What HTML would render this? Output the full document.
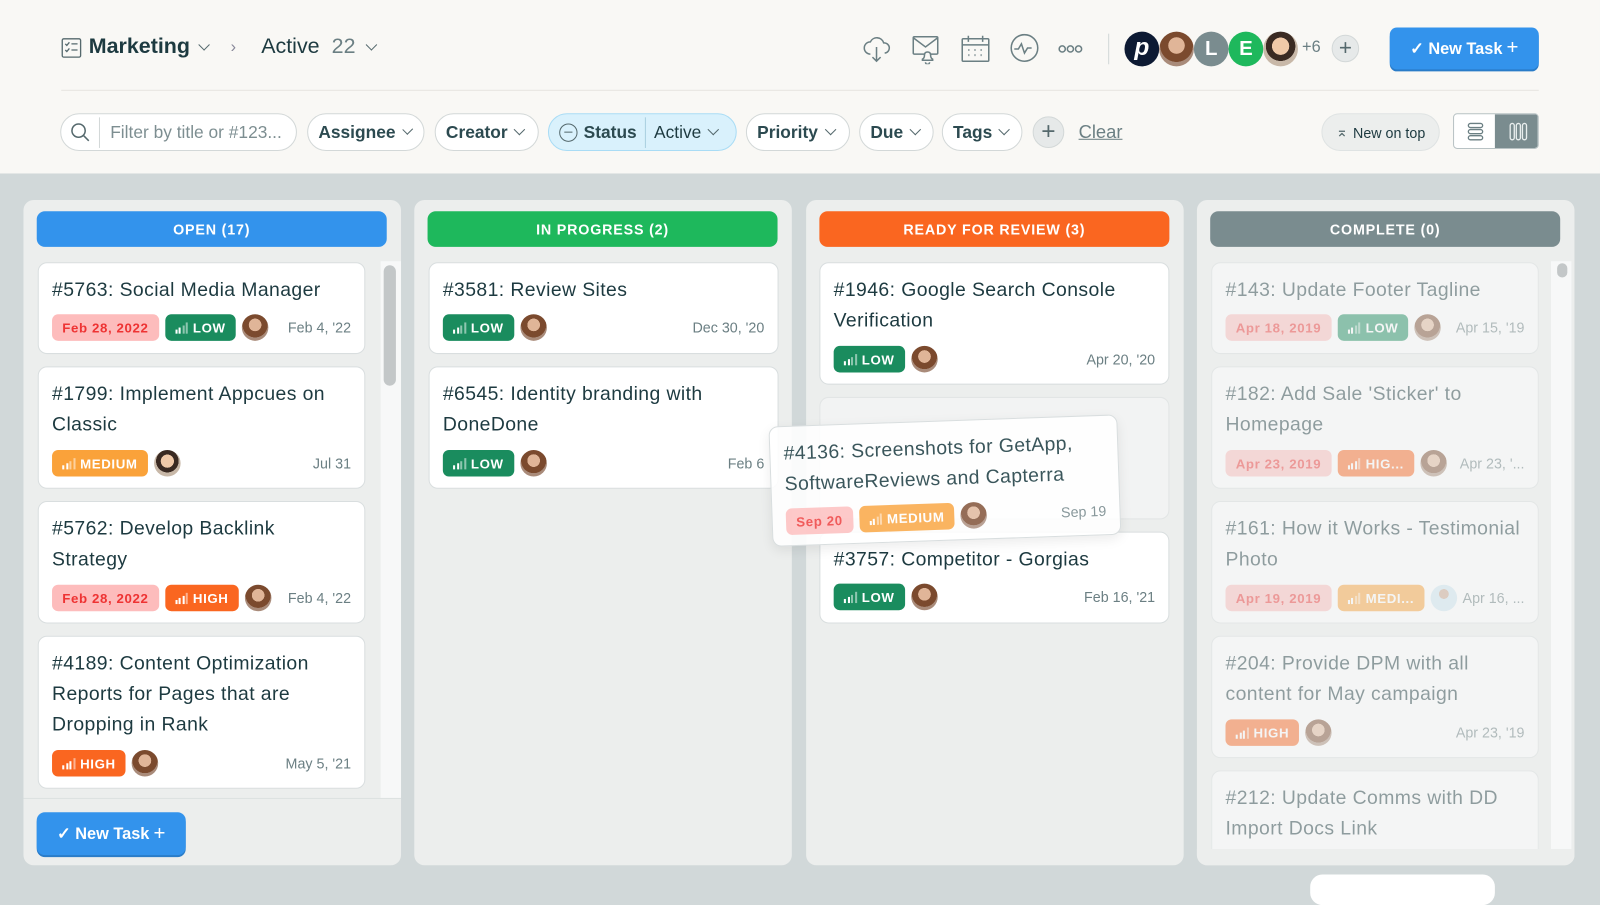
<!DOCTYPE html>
<html><head><meta charset="utf-8"><style>
*{box-sizing:border-box;margin:0;padding:0}
html,body{width:1600px;height:890px;overflow:hidden;background:#d1d8d9}
#root{position:absolute;left:0;top:0;width:1568px;height:872px;transform:scale(1.0204);transform-origin:0 0;font-family:"Liberation Sans",sans-serif;color:#1d3a40}
.hdr{position:absolute;left:0;top:0;width:1568px;height:170px;background:#f9f8f5}
.abs{position:absolute}
.pill{position:absolute;top:111px;height:37px;border:1px solid #d3d8d8;border-radius:19px;background:#fff;font-size:17px;font-weight:bold;color:#2c4a50;display:flex;align-items:center;padding:0 10px}
.chev{display:inline-block;width:8px;height:8px;border-right:1.5px solid #55696d;border-bottom:1.5px solid #55696d;transform:rotate(45deg);margin:-5px 2px 0 8px}
.col{position:absolute;top:196px;width:370px;height:652px;background:#eceeed;border-radius:10px}
.ch{position:absolute;left:13px;top:11px;width:343px;height:35px;border-radius:8px;color:#fff;font-size:14px;font-weight:bold;letter-spacing:.8px;display:flex;align-items:center;justify-content:center}
.card{position:absolute;background:#fff;border:1px solid #d9dedf;border-radius:9px}
.t{position:absolute;left:13px;top:12px;font-size:19px;line-height:30px;color:#1d3a40;white-space:nowrap;letter-spacing:.4px}
.row{position:absolute;left:13px;right:13px;height:26px;display:flex;align-items:center}
.b{height:26px;border-radius:6px;font-size:13px;font-weight:bold;letter-spacing:.6px;display:flex;align-items:center;padding:0 10px;margin-right:6px;color:#fff;white-space:nowrap}
.due{background:#fdbcbc;color:#ee3333}
.low{background:#1a8c5e}.med{background:#faa23a}.high{background:#fa6620}
.bars{display:inline-flex;align-items:flex-end;gap:1.5px;margin-right:5px;height:11px}
.bars i{display:block;width:2px;background:#fff}
.av{width:26px;height:26px;border-radius:50%;background:radial-gradient(circle at 50% 40%,#e0b598 0 30%,#7b4a2e 31% 60%,#a98b7a 61%);flex:none}
.av2{background:radial-gradient(circle at 50% 42%,#f0c9a8 0 32%,#3a2a22 33% 55%,#c8b8a8 56%)}
.d{margin-left:auto;font-size:14px;color:#6b7f83}
.fade{opacity:.45}
</style></head><body><div id="root">
<div class="hdr"></div>
<svg class="abs" style="left:60px;top:37px" width="20" height="20" viewBox="0 0 20 20" fill="none" stroke="#55696d" stroke-width="1.3"><rect x="1" y="1" width="18" height="18" rx="1.5"/><path d="M4 6l1.5 1.5L8 4.5M10 6h6M4 12l1.5 1.5L8 10.5M10 12h6"/></svg>
<div class="abs" style="left:87px;top:34px;font-size:21px;font-weight:bold;color:#1d3a40">Marketing</div>
<span class="chev abs" style="left:188px;top:45px"></span>
<div class="abs" style="left:226px;top:38px;font-size:16px;color:#889">›</div>
<div class="abs" style="left:256px;top:34px;font-size:21px;color:#1d3a40">Active <span style="color:#6b7f83;margin-left:6px">22</span></div>
<span class="chev abs" style="left:352px;top:45px"></span>
<svg class="abs" style="left:845px;top:33px" width="240" height="30" viewBox="0 0 240 30" fill="none" stroke="#6b7f83" stroke-width="1.5">
<path d="M8 20a6 6 0 0 1 0-12a7 7 0 0 1 13 1a5 5 0 0 1 1 10M14 13v14M10 23l4 4 4-4"/>
<rect x="50" y="3" width="24" height="17" rx="1"/><path d="M50 4l12 9 12-9M62 28a2 2 0 0 0 4 0M59 26h10v-1q-2-1-2-4q0-3-3-3q-3 0-3 3q0 3-2 4z" fill="#f9f8f5"/>
<rect x="98" y="5" width="26" height="22" rx="1"/><path d="M98 11h26M104 2v6M118 2v6"/><path d="M104 16h1M110 16h1M116 16h1M104 21h1M110 21h1M116 21h1" stroke-width="2"/>
<circle cx="159" cy="14" r="13"/><path d="M149 15h4l3-5 3 9 3-5h4"/>
<circle cx="196" cy="15" r="3"/><circle cx="204" cy="15" r="3"/><circle cx="212" cy="15" r="3"/>
</svg>
<div class="abs" style="left:1086px;top:33px;width:1px;height:30px;background:#d3d8d8"></div>
<div class="abs" style="left:1102px;top:31px;width:34px;height:34px;border-radius:50%;background:#0d1a33;color:#fff;font-size:24px;font-weight:bold;font-style:italic;text-align:center;line-height:32px">p</div>
<div class="abs av" style="left:1136px;top:31px;width:34px;height:34px"></div>
<div class="abs" style="left:1170px;top:31px;width:34px;height:34px;border-radius:50%;background:#7a8c8f;color:#fff;font-size:20px;font-weight:bold;text-align:center;line-height:34px">L</div>
<div class="abs" style="left:1204px;top:31px;width:34px;height:34px;border-radius:50%;background:#1eb85c;color:#fff;font-size:20px;font-weight:bold;text-align:center;line-height:34px">E</div>
<div class="abs av av2" style="left:1238px;top:31px;width:34px;height:34px"></div>
<div class="abs" style="left:1276px;top:38px;font-size:16px;color:#6b7f83">+6</div>
<div class="abs" style="left:1305px;top:34px;width:27px;height:27px;border-radius:50%;background:#e6e9e9;border:1px solid #d3d8d8;text-align:center;line-height:24px;font-size:22px;color:#55696d">+</div>
<div class="abs" style="left:1362px;top:27px;width:146px;height:41px;border-radius:7px;background:#3393ec;box-shadow:0 2px 0 #2a7cc8;color:#fff;font-size:16px;font-weight:bold;display:flex;align-items:center;justify-content:center">✓ New Task <span style="font-weight:normal;font-size:20px;margin-left:4px">+</span></div>
<div class="abs" style="left:60px;top:88px;width:1448px;height:1px;background:#e6e5e1"></div>
<div class="pill" style="left:59px;width:232px;font-weight:normal;color:#7d8e91;padding:0"><svg style="margin:0 8px 0 9px" width="20" height="20" viewBox="0 0 20 20" fill="none" stroke="#55696d" stroke-width="1.5"><circle cx="8" cy="8" r="6.5"/><path d="M13 13l5 5"/></svg><span style="width:1px;height:30px;background:#d3d8d8;margin-right:10px"></span>Filter by title or #123...</div>
<div class="pill" style="left:301px;width:115px">Assignee<span class="chev"></span></div>
<div class="pill" style="left:426px;width:102px">Creator<span class="chev"></span></div>
<div class="pill" style="left:537px;width:185px;background:#d9f1fc;border-color:#a9dcf5"><span style="width:18px;height:18px;border:1.3px solid #55696d;border-radius:50%;display:inline-block;margin-right:6px;position:relative"><i style="position:absolute;left:4px;top:7.5px;width:8px;height:1.3px;background:#55696d"></i></span>Status<span style="width:1px;height:30px;background:#a9cfdf;margin:0 8px"></span><span style="font-weight:normal;color:#1d3a40">Active</span><span class="chev"></span></div>
<div class="pill" style="left:731px;width:102px">Priority<span class="chev"></span></div>
<div class="pill" style="left:842px;width:73px">Due<span class="chev"></span></div>
<div class="pill" style="left:923px;width:79px">Tags<span class="chev"></span></div>
<div class="abs" style="left:1012px;top:114px;width:31px;height:31px;border-radius:50%;background:#e6e9e9;border:1px solid #d3d8d8;text-align:center;line-height:27px;font-size:24px;color:#55696d">+</div>
<div class="abs" style="left:1057px;top:119px;font-size:18px;color:#6b7f83;text-decoration:underline">Clear</div>
<div class="abs" style="left:1295px;top:111px;width:116px;height:37px;border-radius:19px;background:#eceeed;border:1px solid #dfe3e3;font-size:14px;color:#1d3a40;display:flex;align-items:center;justify-content:center"><span style="font-size:14px;color:#55696d;margin-right:5px">⌅</span>New on top</div>
<div class="abs" style="left:1424px;top:111px;width:84px;height:35px;border:1px solid #b8c2c4;border-radius:4px;background:#fff;overflow:hidden"><div style="position:absolute;right:0;top:0;width:42px;height:35px;background:#7a8c8f"></div>
<svg style="position:absolute;left:12px;top:8px" width="18" height="18" fill="none" stroke="#6b7f83" stroke-width="1.3"><rect x="2" y="1" width="14" height="4" rx="2"/><rect x="2" y="7" width="14" height="4" rx="2"/><rect x="2" y="13" width="14" height="4" rx="2"/></svg>
<svg style="position:absolute;left:54px;top:8px" width="18" height="18" fill="none" stroke="#e9eeee" stroke-width="1.3"><rect x="1" y="1" width="4" height="16" rx="2"/><rect x="7" y="1" width="4" height="16" rx="2"/><rect x="13" y="1" width="4" height="16" rx="2"/></svg></div>

<div class="col" style="left:23px"><div class="ch" style="background:#3393ec">OPEN (17)</div>
<div class="abs" style="left:350px;top:60px;width:20px;height:526px;background:#f7f8f8"></div>
<div class="abs" style="left:353px;top:64px;width:12px;height:118px;border-radius:6px;background:#c3c7c8"></div>
<div class="abs" style="left:0;top:586px;width:370px;height:1px;background:#dde1e1"></div>
<div class="abs" style="left:13px;top:600px;width:146px;height:42px;border-radius:8px;background:#3393ec;box-shadow:0 2px 0 #2a7cc8;color:#fff;font-size:16px;font-weight:bold;display:flex;align-items:center;justify-content:center">✓ New Task <span style="font-weight:normal;font-size:20px;margin-left:4px">+</span></div>
</div>
<div class="col" style="left:406px"><div class="ch" style="background:#1eb85c">IN PROGRESS (2)</div></div>
<div class="col" style="left:790px"><div class="ch" style="background:#fa6620">READY FOR REVIEW (3)</div></div>
<div class="col" style="left:1173px"><div class="ch" style="background:#7a8c8f">COMPLETE (0)</div>
<div class="abs" style="left:347px;top:60px;width:20px;height:576px;background:#f7f8f8"></div>
<div class="abs" style="left:353px;top:62px;width:10px;height:14px;border-radius:5px;background:#c3c7c8"></div></div>

<div class="card" style="left:37px;top:257px;width:321px;height:90px"><div class="t">#5763: Social Media Manager</div>
<div class="row" style="top:50px"><span class="b due">Feb 28, 2022</span><span class="b low"><span class="bars"><i style="height:4px"></i><i style="height:6px"></i><i style="height:8px;opacity:.5"></i><i style="height:11px;opacity:.5"></i></span>LOW</span><span class="av"></span><span class="d">Feb 4, '22</span></div></div>
<div class="card" style="left:37px;top:359px;width:321px;height:120px"><div class="t">#1799: Implement Appcues on<br>Classic</div>
<div class="row" style="top:81px"><span class="b med"><span class="bars"><i style="height:4px"></i><i style="height:6px"></i><i style="height:8px;opacity:.5"></i><i style="height:11px;opacity:.5"></i></span>MEDIUM</span><span class="av av2"></span><span class="d">Jul 31</span></div></div>
<div class="card" style="left:37px;top:491px;width:321px;height:120px"><div class="t">#5762: Develop Backlink<br>Strategy</div>
<div class="row" style="top:81px"><span class="b due">Feb 28, 2022</span><span class="b high"><span class="bars"><i style="height:4px"></i><i style="height:6px"></i><i style="height:8px"></i><i style="height:11px;opacity:.5"></i></span>HIGH</span><span class="av"></span><span class="d">Feb 4, '22</span></div></div>
<div class="card" style="left:37px;top:623px;width:321px;height:150px"><div class="t">#4189: Content Optimization<br>Reports for Pages that are<br>Dropping in Rank</div>
<div class="row" style="top:111px"><span class="b high"><span class="bars"><i style="height:4px"></i><i style="height:6px"></i><i style="height:8px"></i><i style="height:11px;opacity:.5"></i></span>HIGH</span><span class="av"></span><span class="d">May 5, '21</span></div></div>

<div class="card" style="left:420px;top:257px;width:343px;height:90px"><div class="t">#3581: Review Sites</div>
<div class="row" style="top:50px"><span class="b low"><span class="bars"><i style="height:4px"></i><i style="height:6px"></i><i style="height:8px;opacity:.5"></i><i style="height:11px;opacity:.5"></i></span>LOW</span><span class="av"></span><span class="d">Dec 30, '20</span></div></div>
<div class="card" style="left:420px;top:359px;width:343px;height:120px"><div class="t">#6545: Identity branding with<br>DoneDone</div>
<div class="row" style="top:81px"><span class="b low"><span class="bars"><i style="height:4px"></i><i style="height:6px"></i><i style="height:8px;opacity:.5"></i><i style="height:11px;opacity:.5"></i></span>LOW</span><span class="av"></span><span class="d">Feb 6</span></div></div>

<div class="card" style="left:803px;top:257px;width:343px;height:120px"><div class="t">#1946: Google Search Console<br>Verification</div>
<div class="row" style="top:81px"><span class="b low"><span class="bars"><i style="height:4px"></i><i style="height:6px"></i><i style="height:8px;opacity:.5"></i><i style="height:11px;opacity:.5"></i></span>LOW</span><span class="av"></span><span class="d">Apr 20, '20</span></div></div>
<div class="abs" style="left:803px;top:389px;width:343px;height:120px;border-radius:9px;background:#f2f3f3;border:1px solid #e2e5e5"></div>
<div class="card" style="left:803px;top:521px;width:343px;height:90px"><div class="t" style="top:12px">#3757: Competitor - Gorgias</div>
<div class="row" style="top:50px"><span class="b low"><span class="bars"><i style="height:4px"></i><i style="height:6px"></i><i style="height:8px;opacity:.5"></i><i style="height:11px;opacity:.5"></i></span>LOW</span><span class="av"></span><span class="d">Feb 16, '21</span></div></div>
<div class="card" style="left:755px;top:412px;width:342px;height:118px;transform:rotate(-2deg);background:rgba(255,255,255,.88);box-shadow:0 4px 12px rgba(0,0,0,.08)"><div class="t" style="color:#3a565b">#4136: Screenshots for GetApp,<br>SoftwareReviews and Capterra</div>
<div class="row" style="top:80px;opacity:.8"><span class="b due">Sep 20</span><span class="b med"><span class="bars"><i style="height:4px"></i><i style="height:6px"></i><i style="height:8px;opacity:.5"></i><i style="height:11px;opacity:.5"></i></span>MEDIUM</span><span class="av"></span><span class="d">Sep 19</span></div></div>

<div class="fade">
<div class="card" style="left:1187px;top:257px;width:321px;height:90px"><div class="t">#143: Update Footer Tagline</div>
<div class="row" style="top:50px"><span class="b due">Apr 18, 2019</span><span class="b low"><span class="bars"><i style="height:4px"></i><i style="height:6px"></i><i style="height:8px;opacity:.5"></i><i style="height:11px;opacity:.5"></i></span>LOW</span><span class="av"></span><span class="d">Apr 15, '19</span></div></div>
<div class="card" style="left:1187px;top:359px;width:321px;height:120px"><div class="t">#182: Add Sale 'Sticker' to<br>Homepage</div>
<div class="row" style="top:81px"><span class="b due">Apr 23, 2019</span><span class="b high"><span class="bars"><i style="height:4px"></i><i style="height:6px"></i><i style="height:8px"></i><i style="height:11px;opacity:.5"></i></span>HIG...</span><span class="av"></span><span class="d">Apr 23, '...</span></div></div>
<div class="card" style="left:1187px;top:491px;width:321px;height:120px"><div class="t">#161: How it Works - Testimonial<br>Photo</div>
<div class="row" style="top:81px"><span class="b due">Apr 19, 2019</span><span class="b med"><span class="bars"><i style="height:4px"></i><i style="height:6px"></i><i style="height:8px;opacity:.5"></i><i style="height:11px;opacity:.5"></i></span>MEDI...</span><span class="av" style="background:radial-gradient(circle at 50% 35%,#c9a58c 0 22%,#cfe6f3 23%)"></span><span class="d">Apr 16, ...</span></div></div>
<div class="card" style="left:1187px;top:623px;width:321px;height:120px"><div class="t">#204: Provide DPM with all<br>content for May campaign</div>
<div class="row" style="top:81px"><span class="b high"><span class="bars"><i style="height:4px"></i><i style="height:6px"></i><i style="height:8px"></i><i style="height:11px;opacity:.5"></i></span>HIGH</span><span class="av"></span><span class="d">Apr 23, '19</span></div></div>
<div class="card" style="left:1187px;top:755px;width:321px;height:77px;border-bottom:none;border-radius:9px 9px 0 0"><div class="t">#212: Update Comms with DD<br>Import Docs Link</div></div>
</div>
<div class="abs" style="left:1173px;top:832px;width:370px;height:16px;background:#eceeed;border-radius:0 0 10px 10px"></div>
<div class="abs" style="left:1284px;top:857px;width:181px;height:30px;border-radius:12px;background:#fff"></div>
</div></body></html>
